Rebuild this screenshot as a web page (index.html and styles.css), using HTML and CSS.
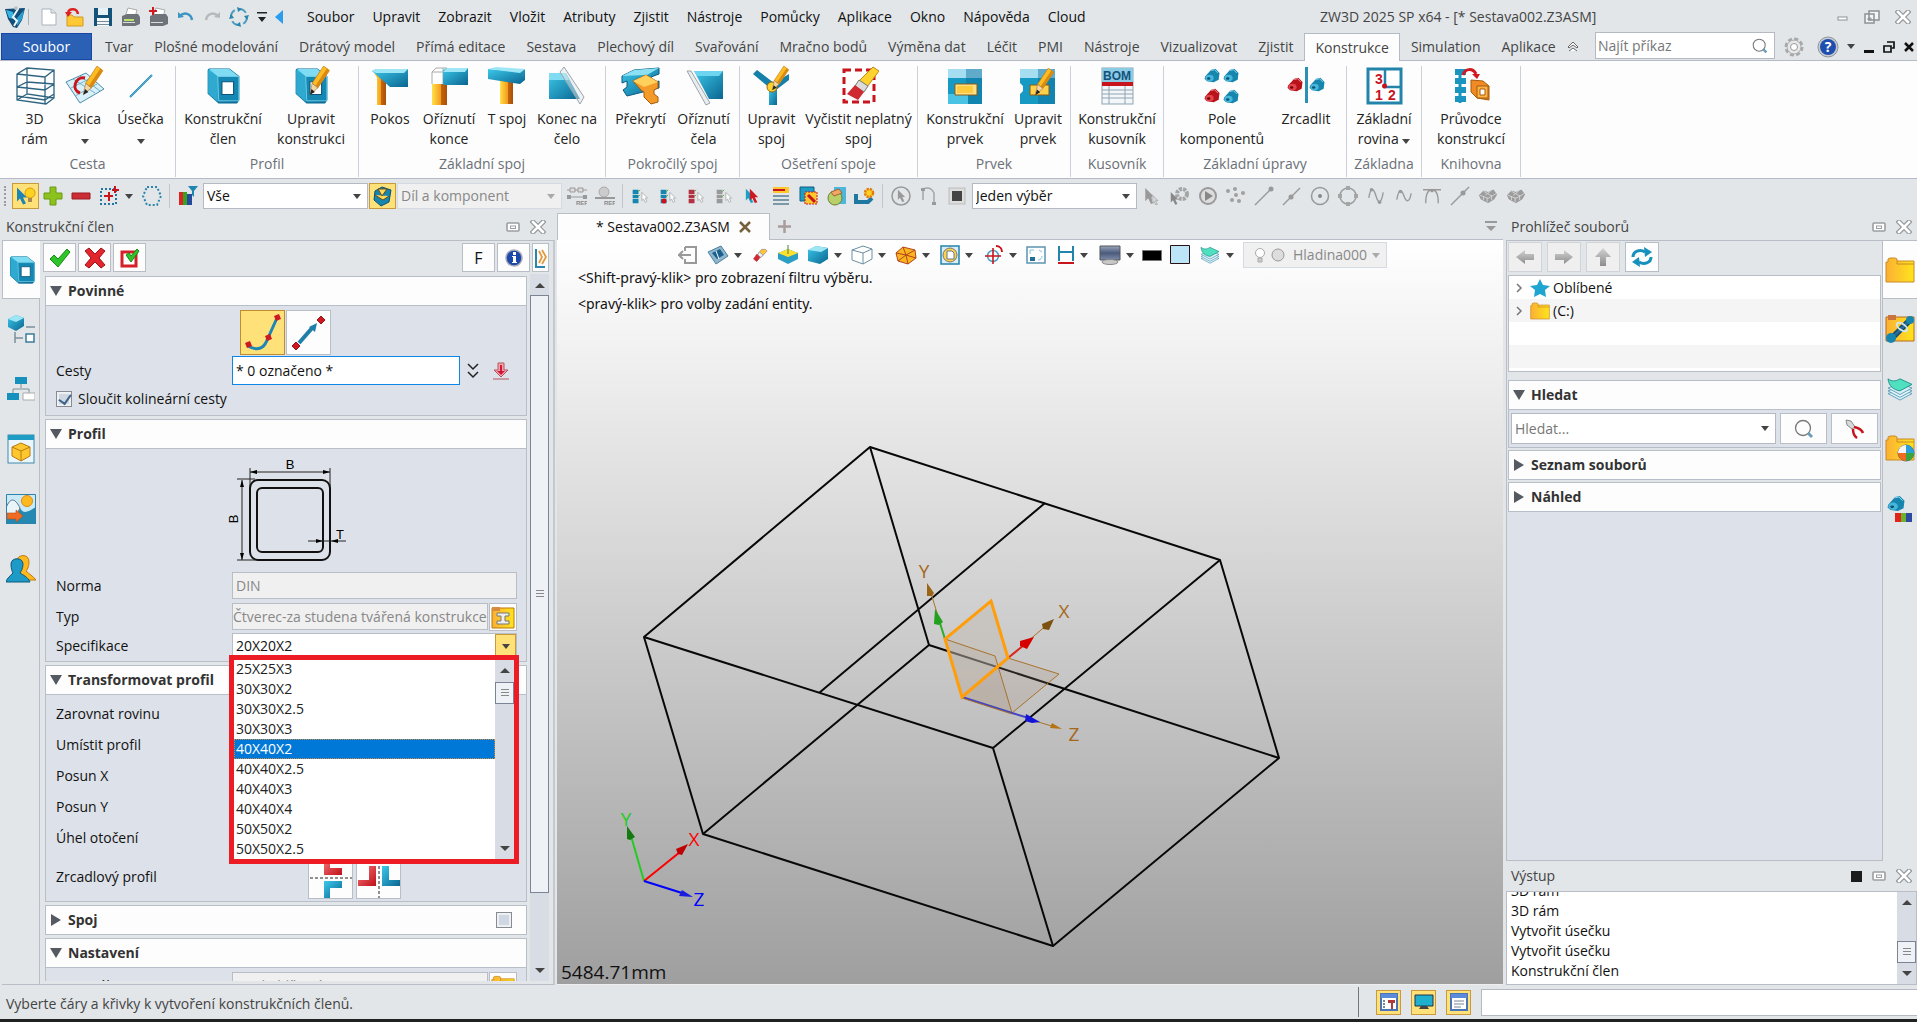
FILE: index.html
```html
<!DOCTYPE html>
<html lang="cs">
<head>
<meta charset="utf-8">
<title>ZW3D 2025 SP x64 - [* Sestava002.Z3ASM]</title>
<link rel="stylesheet" href="styles.css">
</head>
<body>
<svg class="defs" width="0" height="0" aria-hidden="true">
  <defs>
    <linearGradient id="gBlue" x1="0" y1="0" x2="1" y2="1"><stop offset="0" stop-color="#3cc8ea"/><stop offset="1" stop-color="#0a6590"/></linearGradient>
    <linearGradient id="gLight" x1="0" y1="0" x2="1" y2="1"><stop offset="0" stop-color="#e4f7fd"/><stop offset="1" stop-color="#4fc3e6"/></linearGradient>
    <linearGradient id="gGold" x1="0" y1="0" x2="1" y2="0"><stop offset="0" stop-color="#fbb034"/><stop offset="1" stop-color="#ffe41c"/></linearGradient>
    <linearGradient id="gPost" x1="0" y1="0" x2="1" y2="0"><stop offset="0" stop-color="#ffe14a"/><stop offset=".6" stop-color="#f39a1e"/><stop offset=".6" stop-color="#c7660c"/><stop offset="1" stop-color="#a84f08"/></linearGradient>
    <linearGradient id="gGrey" x1="0" y1="0" x2="0" y2="1"><stop offset="0" stop-color="#d2d2d2"/><stop offset="1" stop-color="#8d8d8d"/></linearGradient>
    <linearGradient id="gRed" x1="0" y1="0" x2="1" y2="1"><stop offset="0" stop-color="#f4777c"/><stop offset="1" stop-color="#c01018"/></linearGradient>
    <linearGradient id="gScreen" x1="0" y1="0" x2="0" y2="1"><stop offset="0" stop-color="#9aa6bd"/><stop offset=".5" stop-color="#4a5a7c"/><stop offset="1" stop-color="#7f8cab"/></linearGradient>
    <symbol id="caret" viewBox="0 0 8 5" preserveAspectRatio="none"><path d="M0 0h8L4 5z"/></symbol>
    <symbol id="pin" viewBox="0 0 14 10"><rect x="1" y="1" width="12" height="8" rx="1" fill="#fff" stroke="#9a9ea2" stroke-width="1.6"/><rect x="4.500" y="4" width="5" height="2.500" fill="#fff" stroke="#9a9ea2"/></symbol>
    <symbol id="close" viewBox="0 0 16 14"><path d="M3 2l10 10M13 2L3 12" stroke="#94989c" stroke-width="5" stroke-linecap="square"/><path d="M3 2l10 10M13 2L3 12" stroke="#fff" stroke-width="2.600" stroke-linecap="square"/></symbol>
    <symbol id="pencil" viewBox="0 0 20 26"><path d="M14 0l5 4-10 15-5-4z" fill="#fdbd22" stroke="#c17a0b" stroke-width=".6"/><path d="M17 2l2 2L9 19l-2-2z" fill="#d98a12"/><path d="M4 15l5 4-7 6z" fill="#f4d6a6" stroke="#8c6a3c" stroke-width=".5"/><path d="M2 25l1.500-5 3 2.500z" fill="#222"/></symbol>
    <symbol id="tube" viewBox="1 0 32 34"><path d="M4 1h19l9 7v22l-2 3H13l-10-9V2z" fill="url(#gBlue)" stroke="#0a6a94"/><path d="M4 1h19l9 7H12z" fill="#7fdcf3"/><path d="M3 2l9 6v24l-9-8z" fill="#2fa9cf"/><path d="M12 8h20v23H13z" fill="#1488b2" stroke="#7ad6ee" stroke-width=".8"/><path d="M16 13h11v12H16z" fill="#fff" stroke="#0a5478"/></symbol>
    <symbol id="folder" viewBox="0 0 30 26"><path d="M1 5h2V2l2-1h5l2 1v2h17v21H1z" fill="url(#gGold)" stroke="#c98a2a"/><path d="M12 4v3h17" fill="none" stroke="#c98a2a"/></symbol>
    <symbol id="layers" viewBox="0 0 30 26"><path d="M2 18l13 7 13-7-12-5z" fill="#d7eef7" stroke="#5b9db8"/><path d="M2 15l13 7 13-7-12-5z" fill="#e9f7fc" stroke="#5b9db8"/><path d="M2 12l13 7 13-7-12-5z" fill="#d7eef7" stroke="#5b9db8"/><path d="M2 2c4 3 8 3 13 0l13 6-13 7C8 14 3 10 2 2z" fill="#4fe0c0" stroke="#1f8f86"/></symbol>
    <symbol id="arrowcur" viewBox="0 0 12 18"><path d="M1 1l10 10H7l3 6-3 1-3-6-3 3z"/></symbol>
    <symbol id="blob" viewBox="0 0 20 18"><path d="M2 10l7-8 5-1 5 5-1 8-6 3-8-1-3-3z" fill="#1786ae"/><ellipse cx="7" cy="12" rx="5" ry="4" fill="#46b6da"/><ellipse cx="6" cy="12.500" rx="2" ry="1.500" fill="#0b5272"/><path d="M9 3l4-1 4 4" stroke="#8fe0f5" fill="none"/></symbol>
    <symbol id="blobred" viewBox="0 0 20 18"><path d="M2 10l7-8 5-1 5 5-1 8-6 3-8-1-3-3z" fill="#b8131b"/><ellipse cx="7" cy="12" rx="5" ry="4" fill="#e2444b"/><ellipse cx="6" cy="12.500" rx="2" ry="1.500" fill="#6e0508"/><path d="M9 3l4-1 4 4" stroke="#f9a1a4" fill="none"/></symbol>
    <symbol id="lens" viewBox="0 0 20 20"><circle cx="9" cy="9" r="7.500" fill="none" stroke="#777" stroke-width="1.300"/><path d="M14 14l4 4" stroke="#6b9dbb" stroke-width="3"/></symbol>
    <symbol id="rows" viewBox="0 0 24 20"><path d="M2 2h7v5H2zM2 8h7v4H2zM2 13h7v5H2z"/><path d="M9 4l2-2M9 10l2-2" stroke="#3aa11e"/><path d="M13 5l7 7h-3l2 4-2 1-2-4-2 2z" fill="#fff" stroke="#aaa"/></symbol>
    <symbol id="mesh" viewBox="0 0 22 20" preserveAspectRatio="none"><path d="M1 9l5-6 5 2 6-3 4 6-3 6-7 5-8-5z" fill="#9c9c9c"/><path d="M2 9l9 4 9-6M6 4l9 6M10 12v6M15 9v6M6 10v5M8 9l6-5" stroke="#d9d9d9" fill="none"/></symbol>
  </defs>
</svg>

<header>
  <div class="titlebar">
    <div class="quick">
      <svg width="22" height="24" viewBox="0 0 22 24"><path d="M1 4l20-1-3 12-5 8-4-1-5-8z" fill="#124e78"/><path d="M2 5l7 2 1 7-5-1z" fill="#37b5e6"/><path d="M13 13l7-8-2 9-5 7z" fill="#2b9ed2"/><path d="M11 1l3 3-5 8 4 4-3 5" stroke="#eef6fa" stroke-width="2" fill="none"/><circle cx="12" cy="3" r="2" fill="#b8c4cc"/></svg>
      <i class="vline"></i>
      <svg width="16" height="18" viewBox="0 0 16 18"><path d="M1 1h9l5 4v12H1z" fill="#fff" stroke="#a9b3bb"/><path d="M10 1v4h5" fill="#dfe6eb" stroke="#a9b3bb"/></svg>
      <svg width="20" height="20" viewBox="0 0 20 20"><path d="M2 8h5l2 2h9v9H2z" fill="#ffc835" stroke="#cf9a22"/><path d="M3 5c2-4 9-4 10 2" fill="none" stroke="#d22" stroke-width="2.500"/><path d="M0 5h7L3 10z" fill="#d22"/></svg>
      <svg width="20" height="20" viewBox="0 0 20 20"><path d="M1 1h18v18H1z" fill="#14527a"/><path d="M5 1h10v7H5z" fill="#e6f1f7"/><path d="M4 11h12v8H4z" fill="#f4f7f9"/><path d="M4 14h12v1H4zM4 17h12v1H4z" fill="#789"/></svg>
      <svg width="20" height="20" viewBox="0 0 20 20"><path d="M7 1l9 2-2 7H4z" fill="#fff" stroke="#aaa"/><path d="M1 9l5-2h11l2 3v7l-5 2H1z" fill="#6d7378"/><path d="M3 12h10v2H3z" fill="#b9e36a"/><path d="M2 15h12v1H2z" fill="#ddd"/></svg>
      <svg width="20" height="20" viewBox="0 0 20 20"><path d="M7 1l9 2-2 7H4z" fill="#fff" stroke="#aaa"/><path d="M1 9l5-2h11l2 3v7l-5 2H1z" fill="#6d7378"/><path d="M2 15h12v1H2z" fill="#ddd"/><path d="M4 0v8M0 4h8" stroke="#d21820" stroke-width="2"/></svg>
      <svg width="18" height="14" viewBox="0 0 18 14"><path d="M3 6c4-4 11-3 12 4" fill="none" stroke="#3a95c2" stroke-width="2.500"/><path d="M1 8V2l6 5z" fill="#3a95c2"/></svg>
      <svg width="18" height="14" viewBox="0 0 18 14"><path d="M15 6C11 2 4 3 3 10" fill="none" stroke="#b5b9bc" stroke-width="2.500"/><path d="M17 8V2l-6 5z" fill="#b5b9bc"/></svg>
      <svg width="20" height="20" viewBox="0 0 20 20"><circle cx="10" cy="10" r="8" fill="none" stroke="#4a9dbf" stroke-width="2" stroke-dasharray="8 4.500"/><path d="M8 0l5 2-4 3zM12 20l-5-2 4-3zM0 12l2-5 3 4zM20 8l-2 5-3-4z" fill="#2b86ad"/></svg>
      <svg width="10" height="10" viewBox="0 0 10 10"><path d="M0 0h10v1.500H0zM1 5h8L5 10z" fill="#222"/></svg>
      <svg width="8" height="14" viewBox="0 0 8 14"><path d="M8 0v14L0 7z" fill="#2a9df0"/></svg>
    </div>
    <nav class="menu">
      <a href="#">Soubor</a><a href="#">Upravit</a><a href="#">Zobrazit</a><a href="#">Vložit</a><a href="#">Atributy</a><a href="#">Zjistit</a><a href="#">Nástroje</a><a href="#">Pomůcky</a><a href="#">Aplikace</a><a href="#">Okno</a><a href="#">Nápověda</a><a href="#">Cloud</a>
    </nav>
    <h1>ZW3D 2025 SP x64 - [* Sestava002.Z3ASM]</h1>
    <div class="wincontrols">
      <button aria-label="Minimalizovat"><svg width="12" height="6" viewBox="0 0 12 6"><rect x="1" y="1" width="9" height="3" fill="#fff" stroke="#8d9195"/></svg></button>
      <button aria-label="Obnovit"><svg width="16" height="14" viewBox="0 0 16 14"><path d="M5 1h10v9H5zM1 4h9v9H1z" fill="#f4f5f6" stroke="#8d9195" stroke-width="1.500"/><path d="M4 8h3v2H4z" fill="none" stroke="#8d9195"/></svg></button>
      <button aria-label="Zavřít"><svg width="16" height="14"><use href="#close"/></svg></button>
    </div>
  </div>

  <div class="tabs">
    <button class="file">Soubor</button>
    <button>Tvar</button><button>Plošné modelování</button><button>Drátový model</button><button>Přímá editace</button><button>Sestava</button><button>Plechový díl</button><button>Svařování</button><button>Mračno bodů</button><button>Výměna dat</button><button>Léčit</button><button>PMI</button><button>Nástroje</button><button>Vizualizovat</button><button>Zjistit</button><button class="on">Konstrukce</button><button>Simulation</button><button>Aplikace</button>
    <div class="tabtools">
      <svg width="12" height="12" viewBox="0 0 12 12"><path d="M1 6l5-5 5 5-1 1-4-3-4 3zM2 10l4-3 4 3" fill="#fff" stroke="#666"/></svg>
      <label class="find"><input type="text" placeholder="Najít příkaz" aria-label="Najít příkaz"><svg width="16" height="16"><use href="#lens"/></svg></label>
      <svg width="22" height="22" viewBox="0 0 22 22"><circle cx="11" cy="11" r="8" fill="#eee" stroke="#a5a9ac" stroke-width="3" stroke-dasharray="4 2.280"/><circle cx="11" cy="11" r="7" fill="#e8e8e8" stroke="#a5a9ac"/><circle cx="11" cy="11" r="3.500" fill="#fff" stroke="#999"/></svg>
      <svg class="help" width="22" height="22" viewBox="0 0 22 22"><circle cx="11" cy="11" r="10" fill="#c7ccd4" stroke="#8e949c"/><circle cx="11" cy="11" r="8" fill="#1f4fae"/><text x="11" y="16" text-anchor="middle" class="qmark">?</text></svg>
      <svg class="dark" width="8" height="5"><use href="#caret"/></svg>
      <svg width="12" height="14" viewBox="0 0 12 14"><path d="M1 10h10v3H1z" fill="#111"/></svg>
      <svg width="12" height="14" viewBox="0 0 12 14"><path d="M4 2h7v6H9M1 6h7v6H1z" fill="none" stroke="#111" stroke-width="1.700"/></svg>
      <svg width="12" height="12" viewBox="0 0 12 12"><path d="M2 2l8 8M10 2l-8 8" stroke="#111" stroke-width="2.500"/></svg>
    </div>
  </div>

  <div class="ribbon">
    <section class="g175"><div>
      <button class="w48"><svg width="40" height="40" viewBox="0 0 40 40"><g fill="none" stroke="#2c6480" stroke-width="1.300"><path d="M2 8l10-6 27 2v28l-8 6-29-4zM2 8l28 3 9-7M30 11v27M2 21l28 3 9-6M2 21l10-5 27 2M2 30l28 4 9-6M12 2v26l27 4M12 28L2 34"/></g></svg><span>3D<br>rám</span></button>
      <button class="w52"><svg width="40" height="40" viewBox="0 0 40 40"><path d="M1 16l20-9 18 16-24 14-6-9z" fill="#d9f0f8" stroke="#4b8fae"/><path d="M8 13l22 14M15 10l20 15M6 22l20-10M10 30l22-12" stroke="#6fb0cb" fill="none"/><path d="M20 12c-10-2-14 12-5 15" fill="none" stroke="#c8141c" stroke-width="3"/><use href="#pencil" x="16" y="0" width="23" height="30"/></svg><span>Skica<br><svg class="dark" width="8" height="5"><use href="#caret"/></svg></span></button>
      <button class="w60"><svg width="40" height="40" viewBox="0 0 40 40"><path d="M9 31L31 9" stroke="#1f86b4" stroke-width="2"/><path d="M9 31L31 9" stroke="#7cc6e2" stroke-width=".6"/></svg><span>Úsečka<br><svg class="dark" width="8" height="5"><use href="#caret"/></svg></span></button>
    </div><h2>Cesta</h2></section>
    <section class="g183"><div>
      <button class="w88"><svg width="40" height="40"><use href="#tube" x="2" y="2" width="36" height="36"/></svg><span>Konstrukční<br>člen</span></button>
      <button class="w88"><svg width="40" height="40"><use href="#tube" x="2" y="2" width="36" height="36"/><use href="#pencil" x="16" y="0" width="24" height="30"/></svg><span>Upravit<br>konstrukci</span></button>
    </div><h2>Profil</h2></section>
    <section class="g247"><div>
      <button class="w54"><svg width="40" height="40" viewBox="0 0 40 40"><path d="M4 7l12 6v26H7V12z" fill="url(#gPost)"/><path d="M2 5l4-2h32v18H20z" fill="url(#gBlue)"/><path d="M2 5l4-2h32l-4 4H6z" fill="#9ee6f6"/></svg><span>Pokos</span></button>
      <button class="w64"><svg width="40" height="40" viewBox="0 0 40 40"><path d="M3 18h15v21H3z" fill="url(#gPost)"/><path d="M3 18V6l4-4h11v4H3M14 2v16" fill="none" stroke="#aaa"/><path d="M14 4l4-2h21v17H14z" fill="url(#gBlue)"/><path d="M14 6l4-4h21l-3 4z" fill="#9ee6f6"/></svg><span>Oříznutí<br>konce</span></button>
      <button class="w52"><svg width="40" height="40" viewBox="0 0 40 40"><path d="M13 14h13v24H13z" fill="url(#gPost)"/><path d="M1 3l32 3 5-3v11l-5 4-32-5z" fill="url(#gBlue)"/><path d="M1 3l8-2 29 2-5 4z" fill="#9ee6f6"/></svg><span>T spoj</span></button>
      <button class="w68"><svg width="40" height="40" viewBox="0 0 40 40"><path d="M2 7h17l14 26H2z" fill="url(#gBlue)"/><path d="M2 7h17l3 7H2z" fill="#7fdcf3"/><path d="M13 6l4-5 20 30-4 7z" fill="#dfe6ea" fill-opacity=".5" stroke="#9aa4aa"/></svg><span>Konec na<br>čelo</span></button>
    </div><h2>Základní spoj</h2></section>
    <section class="g134"><div>
      <button class="w62"><svg width="40" height="40" viewBox="0 0 40 40"><path d="M1 10l12-6 25-2v6l-8 3v6l8-2v7L6 30l-4-6 4-3v-6l-5 2z" fill="url(#gBlue)" stroke="#0a5a80"/><path d="M1 10l12-6 25-2-12 7z" fill="#8be0f4"/><path d="M12 15l13-6 12 7v6l-4 2v4l4 3v5l-7 2-7-7v-5l-3-2z" fill="#f39a28" stroke="#a65a08"/><path d="M12 15l13-6 12 7-14 5z" fill="#ffd05c"/></svg><span>Překrytí</span></button>
      <button class="w64"><svg width="40" height="40" viewBox="0 0 40 40"><path d="M10 5h29v28H25z" fill="url(#gBlue)"/><path d="M10 5h29l-4 5H13z" fill="#6dd5ef"/><path d="M3 5h4l19 32-4 2z" fill="#e9edf0" stroke="#9aa4aa"/></svg><span>Oříznutí<br>čela</span></button>
    </div><h2>Pokročilý spoj</h2></section>
    <section class="g178"><div>
      <button class="w60"><svg width="40" height="40" viewBox="0 0 40 40"><path d="M1 8l4-4 17 13-3 6zM22 17l15-9v6L24 24z" fill="#1580aa"/><path d="M17 22h8v17h-8z" fill="url(#gBlue)"/><circle cx="20" cy="21" r="5" fill="#ffd22e" stroke="#9a6a08"/><use href="#pencil" x="18" y="0" width="20" height="25"/></svg><span>Upravit<br>spoj</span></button>
      <button class="w114"><svg width="40" height="40" viewBox="0 0 40 40"><path d="M5 4h30v32H5z" fill="none" stroke="#c8141c" stroke-width="3" stroke-dasharray="7 4"/><path d="M34 1l6 4-12 16-8-6z" fill="#ffd22e" stroke="#b98a10"/><path d="M20 14l9 6-4 6-9-6z" fill="#dcdcdc" stroke="#777"/><path d="M16 19l9 7-6 8-11-6z" fill="#cf2a32"/></svg><span>Vyčistit neplatný<br>spoj</span></button>
    </div><h2>Ošetření spoje</h2></section>
    <section class="g153"><div>
      <button class="w88"><svg width="40" height="40" viewBox="0 0 40 40"><path d="M3 3h34v35H3z" fill="#169ac4"/><path d="M3 3h34v9H3z" fill="#a5def0"/><path d="M21 3v35h16V3z" fill="#0c6c98" fill-opacity=".45"/><path d="M3 38h20V28H3z" fill="#49c2e4"/><path d="M10 18h22v11H10z" fill="#ffe08a" stroke="#8a5a10"/><path d="M12 20h16v7H12z" fill="#ffca3c"/></svg><span>Konstrukční<br>prvek</span></button>
      <button class="w58"><svg width="40" height="40" viewBox="0 0 40 40"><path d="M2 3h35v35H2V28l3-3v-5l-3-3z" fill="#169ac4"/><path d="M2 3h35v9H2z" fill="#a5def0"/><path d="M20 3v35h17V3z" fill="#0c6c98" fill-opacity=".45"/><path d="M12 19h19v10H12z" fill="#ffd04a" stroke="#8a5a10"/><use href="#pencil" x="14" y="2" width="24" height="28"/></svg><span>Upravit<br>prvek</span></button>
    </div><h2>Prvek</h2></section>
    <section class="g93"><div>
      <button class="w88"><svg width="40" height="40" viewBox="0 0 40 40"><rect x="5" y="2" width="31" height="36" fill="#f4f7f9" stroke="#8fa3b2"/><rect x="5" y="2" width="31" height="14" fill="#8ccbe6"/><text x="20" y="14" text-anchor="middle" class="bom">BOM</text><path d="M5 16h31v4H5z" fill="#c8141c"/><path d="M5 24h31M5 28h31M5 32h31M12 20v18M28 20v18" stroke="#8fa3b2"/></svg><span>Konstrukční<br>kusovník</span></button>
    </div><h2>Kusovník</h2></section>
    <section class="g183 pole"><div>
      <button class="w96"><svg width="40" height="40"><use href="#blob" x="1" y="2" width="18" height="15"/><use href="#blob" x="20" y="2" width="18" height="15"/><use href="#blobred" x="1" y="22" width="18" height="15"/><use href="#blob" x="20" y="23" width="18" height="15"/></svg><span>Pole<br>komponentů</span></button>
      <button class="w72"><svg width="40" height="40" viewBox="0 0 40 40"><use href="#blobred" x="0" y="11" width="18" height="15"/><use href="#blob" x="22" y="11" width="18" height="15"/><path d="M19 1h3v36h-3z" fill="#2d8fb4"/></svg><span>Zrcadlit</span></button>
    </div><h2>Základní úpravy</h2></section>
    <section class="g75"><div>
      <button class="w72"><svg width="40" height="40" viewBox="0 0 40 40"><rect x="4" y="3" width="33" height="34" fill="#fff" stroke="#2284aa" stroke-width="3"/><path d="M21 3v18h16" fill="none" stroke="#2284aa" stroke-width="2.500"/><circle cx="20.500" cy="20" r="2.500" fill="#c8141c"/><text x="11" y="18" class="num">3</text><text x="11" y="34" class="num">1</text><text x="24" y="34" class="num">2</text></svg><span>Základní<br>rovina <svg class="dark" width="8" height="5"><use href="#caret"/></svg></span></button>
    </div><h2>Základna</h2></section>
    <section class="g99"><div>
      <button class="w96"><svg width="40" height="40" viewBox="0 0 40 40"><path d="M4 3h11v6H4zM4 12h11v6H4zM4 21h11v6H4zM4 30h11v6H4z" fill="#1b95c0"/><path d="M9 3v34" stroke="#1b95c0" stroke-width="3"/><path d="M12 9C14 2 22 2 25 8" fill="none" stroke="#d21820" stroke-width="3"/><path d="M21 8h8l-3 5z" fill="#d21820"/><path d="M20 14l12 1 6 5v14l-12-2-6-6z" fill="#f08a24" stroke="#a65a08"/><path d="M26 20h11v12H26z" fill="#ffb347" stroke="#a65a08"/><path d="M29 23h5v6h-5z" fill="#fff" stroke="#a65a08"/></svg><span>Průvodce<br>konstrukcí</span></button>
    </div><h2>Knihovna</h2></section>
  </div>

  <div class="toolbar">
    <i class="grip"></i>
    <button class="tb hot"><svg width="22" height="22" viewBox="0 0 22 22"><use href="#arrowcur" x="1" y="1" width="12" height="19" fill="#1f86b4"/><circle cx="15" cy="8" r="5" fill="#ffd21f" stroke="#d89a10"/><path d="M13 13h4v4h-4z" fill="#a88a50"/></svg></button>
    <button class="tb"><svg width="20" height="20" viewBox="0 0 20 20"><path d="M7 1h6v6h6v6h-6v6H7v-6H1V7h6z" fill="#8cc21e" stroke="#6a9a10"/></svg></button>
    <button class="tb"><svg width="20" height="20" viewBox="0 0 20 20"><path d="M1 7h18v6H1z" fill="#cc2c34" stroke="#9c1820"/></svg></button>
    <button class="tb"><svg width="20" height="20" viewBox="0 0 20 20"><path d="M2 3h15v15H2z" fill="none" stroke="#1f78a0" stroke-width="2" stroke-dasharray="2 2"/><path d="M10 6v9M5 10h9M16 0v7M13 4h7" stroke="#c8141c" stroke-width="2"/></svg></button>
    <svg class="dark gapr" width="8" height="5"><use href="#caret"/></svg>
    <button class="tb"><svg width="20" height="20" viewBox="0 0 20 20"><path d="M5 1h10l4 9-4 9H5l-4-9z" fill="none" stroke="#2b86ad" stroke-width="2" stroke-dasharray="2 2"/></svg></button>
    <i class="tsep"></i>
    <button class="tb"><svg width="20" height="20" viewBox="0 0 20 20"><path d="M1 6h4v13H1z" fill="#d22"/><path d="M5 6h4v13H5z" fill="#3aa11e"/><path d="M9 8h5v11H9z" fill="#234a9c"/><path d="M10 0h10l-4 5v6l-2-2V5z" fill="#1f86b4"/></svg></button>
    <span class="combo"><select aria-label="Filtr"><option>Vše</option></select><svg class="dark" width="8" height="5"><use href="#caret"/></svg></span>
    <button class="tb hot"><svg width="22" height="22" viewBox="0 0 22 22"><path d="M3 6l7-4 9 3-2 12-8 4-7-6z" fill="#1786ae" stroke="#0b5272"/><path d="M3 10l8 5 6-4M6 4h9l-5 7z" fill="#ffd85a" stroke="#6b4a10"/></svg></button>
    <span class="combo off"><select aria-label="Rozsah" disabled><option>Díl a komponent</option></select><svg width="8" height="5"><use href="#caret"/></svg></span>
    <button class="tb"><svg width="20" height="20" viewBox="0 0 20 20"><path d="M0 4h20M0 11h20" stroke="#999"/><path d="M3 2h5v4H3zM11 2h5v4h-5z" fill="#ddd" stroke="#999"/><path d="M0 9h4v4H0zM16 9h4v4h-4z" fill="#999"/><text x="9" y="19" class="ref">REF</text></svg></button>
    <button class="tb"><svg width="20" height="20" viewBox="0 0 20 20"><circle cx="9" cy="6" r="5" fill="#ccc" stroke="#aaa"/><path d="M0 12h20" stroke="#999" stroke-width="2"/><text x="9" y="19" class="ref">REF</text></svg></button>
    <i class="tsep"></i>
    <button class="tb"><svg width="20" height="17" fill="#1786ae"><use href="#rows"/></svg></button>
    <button class="tb"><svg width="20" height="17" fill="#1786ae"><use href="#rows"/><circle cx="5" cy="13" r="2.500" fill="#c8141c"/></svg></button>
    <button class="tb"><svg width="20" height="17" fill="#b33040"><use href="#rows"/></svg></button>
    <button class="tb"><svg width="20" height="17" fill="#999"><use href="#rows"/></svg></button>
    <button class="tb"><svg width="20" height="20"><use href="#arrowcur" x="2" y="2" width="10" height="15" fill="#18a0c8"/><use href="#arrowcur" x="6" y="2" width="10" height="15" fill="#cc1a22"/></svg></button>
    <button class="tb"><svg width="20" height="20" viewBox="0 0 20 20"><path d="M2 1h16v6H2z" fill="#ffc72e"/><path d="M2 4h12" stroke="#c8141c" stroke-width="2"/><path d="M2 10h16M2 14h16M2 18h16" stroke="#7b98a8" stroke-width="2"/></svg></button>
    <button class="tb"><svg width="20" height="20" viewBox="0 0 20 20"><path d="M1 1h14v14H1z" fill="#1f9cc4" stroke="#0f5c80"/><path d="M6 6h12v12H6z" fill="#ffc72e" stroke="#c8141c" stroke-dasharray="2 1"/><path d="M9 9l7 7" stroke="#c8141c" stroke-width="3"/></svg></button>
    <button class="tb"><svg width="20" height="20" viewBox="0 0 20 20"><path d="M7 1h12v17H7z" fill="#4db6da"/><ellipse cx="8" cy="12" rx="7" ry="7" fill="#b9cf6a" stroke="#6c7f34"/><path d="M4 6l8-3 3 4-8 3z" fill="#f0a868" stroke="#a8622a"/></svg></button>
    <button class="tb"><svg width="22" height="20" viewBox="0 0 22 20"><path d="M2 8v8h12l4-4" fill="none" stroke="#1f78a0" stroke-width="4"/><circle cx="15" cy="7" r="4" fill="#ffd21f" stroke="#e07a10" stroke-width="2.500" stroke-dasharray="2.200 1"/></svg></button>
    <i class="tsep"></i>
    <button class="tb"><svg width="22" height="22" viewBox="0 0 22 22"><circle cx="11" cy="11" r="9" fill="none" stroke="#999" stroke-width="1.500"/><use href="#arrowcur" x="7" y="4" width="9" height="13" fill="#999"/></svg></button>
    <button class="tb"><svg width="20" height="20" viewBox="0 0 20 20"><path d="M4 14V3c5-2 9 0 11 4v12" fill="none" stroke="#a5a5a5" stroke-width="1.500"/><path d="M2 2h4v3H2zM13 16h4v3h-4z" fill="#999"/></svg></button>
    <button class="tb"><svg width="18" height="18" viewBox="0 0 18 18"><rect x="1" y="1" width="16" height="16" fill="#ddd" stroke="#bbb"/><rect x="4" y="4" width="10" height="10" fill="#444"/></svg></button>
    <span class="combo"><select aria-label="Výběr"><option>Jeden výběr</option></select><svg class="dark" width="8" height="5"><use href="#caret"/></svg></span>
    <button class="tb"><svg width="20" height="20"><use href="#arrowcur" x="2" y="1" width="12" height="17" fill="#999"/><use href="#arrowcur" x="9" y="8" width="8" height="11" fill="#d5d5d5" stroke="#999"/></svg></button>
    <button class="tb"><svg width="20" height="20" viewBox="0 0 20 20"><circle cx="12" cy="8" r="5" fill="none" stroke="#a5a5a5" stroke-width="4" stroke-dasharray="3 1"/><use href="#arrowcur" x="0" y="5" width="9" height="14" fill="#888"/></svg></button>
    <button class="tb"><svg width="20" height="20" viewBox="0 0 20 20"><circle cx="10" cy="10" r="8" fill="#ddd" stroke="#999" stroke-width="2"/><path d="M7 5l8 5-8 5z" fill="#888"/></svg></button>
    <button class="tb"><svg width="20" height="20" viewBox="0 0 20 20" fill="#a0a0a0"><circle cx="2" cy="5" r="2"/><circle cx="9" cy="3" r="2"/><circle cx="17" cy="7" r="2"/><circle cx="10" cy="9" r="2"/><circle cx="6" cy="14" r="2"/><circle cx="13" cy="15" r="2"/></svg></button>
    <button class="tb"><svg width="20" height="20" viewBox="0 0 20 20"><path d="M1 19L18 2" stroke="#999" stroke-width="1.500"/><circle cx="17" cy="3" r="2.500" fill="#999"/></svg></button>
    <button class="tb"><svg width="20" height="20" viewBox="0 0 20 20"><path d="M1 19L18 2" stroke="#999" stroke-width="1.500"/><circle cx="9" cy="11" r="2.500" fill="#999"/></svg></button>
    <button class="tb"><svg width="20" height="20" viewBox="0 0 20 20"><circle cx="10" cy="10" r="8.500" fill="none" stroke="#999" stroke-width="1.500"/><circle cx="10" cy="10" r="2" fill="#888"/></svg></button>
    <button class="tb"><svg width="20" height="20" viewBox="0 0 20 20"><circle cx="10" cy="10" r="8" fill="none" stroke="#999" stroke-width="1.500"/><path d="M8 0h4v4H8zM8 16h4v4H8zM0 8h4v4H0zM16 8h4v4h-4z" fill="#a5a5a5"/></svg></button>
    <button class="tb"><svg width="18" height="20" viewBox="0 0 20 20"><path d="M2 12C4 0 7 0 10 10s6 8 8-4" fill="none" stroke="#999" stroke-width="1.500"/><circle cx="5" cy="3" r="2" fill="#999"/><circle cx="14" cy="17" r="2" fill="#999"/></svg></button>
    <button class="tb"><svg width="18" height="18" viewBox="0 0 20 20"><path d="M2 14C4 2 7 2 10 10s6 7 8-3" fill="none" stroke="#999" stroke-width="1.500"/><circle cx="6" cy="5" r="2" fill="#999"/></svg></button>
    <button class="tb"><svg width="20" height="18" viewBox="0 0 20 20"><path d="M0 3h20M3 18C3 8 6 3 10 3s7 5 7 15" fill="none" stroke="#999" stroke-width="1.500"/><circle cx="10" cy="4" r="2" fill="#999"/></svg></button>
    <button class="tb"><svg width="20" height="20" viewBox="0 0 20 20"><path d="M1 19L19 1" stroke="#999" stroke-width="1.500"/><circle cx="13" cy="7" r="2.500" fill="#999"/></svg></button>
    <button class="tb"><svg width="20" height="16"><use href="#mesh"/></svg></button>
    <button class="tb"><svg width="20" height="16"><use href="#mesh"/></svg></button>
  </div>
</header>

<main>
  <aside class="left">
    <div class="phead"><h2>Konstrukční člen</h2><svg width="14" height="10"><use href="#pin"/></svg><svg width="16" height="14"><use href="#close"/></svg></div>
    <div class="lbody">
      <nav class="strip">
        <button class="on"><svg width="28" height="28"><use href="#tube"/></svg></button>
        <button><svg width="28" height="30" viewBox="0 0 28 30"><path d="M1 5l8-4 8 3v8l-8 5-8-4z" fill="url(#gBlue)"/><path d="M1 5l8-4 8 3-8 4z" fill="#9ee6f6"/><path d="M19 13h9M8 18v11M8 24h8" stroke="#7c909c" stroke-width="1.500"/><path d="M19 20h8v8h-8z" fill="#fff" stroke="#3b7c9c" stroke-width="1.500"/></svg></button>
        <button><svg width="28" height="26" viewBox="0 0 28 26"><path d="M8 1h12v7H8zM0 17h12v7H0z" fill="#1690bc"/><path d="M14 8v4M6 17v-4h16v4" fill="none" stroke="#7c909c"/><path d="M16 17h12v7H16z" fill="#fff" stroke="#aaa"/></svg></button>
        <button><svg width="28" height="30" viewBox="0 0 28 30"><rect x="1" y="1" width="26" height="28" fill="#eaf6fb" stroke="#3f8aae"/><path d="M1 1h26v5H1z" fill="#1f9cc4"/><path d="M5 13l9-4 9 4v9l-9 5-9-5z" fill="#ffc72e" stroke="#b87a10"/><path d="M5 13l9 4 9-4M14 17v10" fill="none" stroke="#b87a10"/></svg></button>
        <button><svg width="30" height="30" viewBox="0 0 30 30"><path d="M0 0h30v30H0z" fill="#c9e9f6"/><path d="M0 14C5 1 10 6 14 14s10 2 16-1v17H0z" fill="#2389b2"/><path d="M0 14C5 1 10 6 14 14l-4 8H0z" fill="#eaf5fa" stroke="#678"/><circle cx="21" cy="7" r="5.500" fill="#ffb81e" stroke="#e08a10"/><path d="M1 19h9v-3l7 6-7 6v-3H1z" fill="#f06c22" stroke="#b84a10" stroke-width=".6"/><path d="M.5.5h29v29H.5z" fill="none" stroke="#2f83a8"/></svg></button>
        <button><svg width="30" height="28" viewBox="0 0 30 28"><path d="M11 4c3-5 12-5 12 3 0 5-2 8-3 9 3 3 7 5 10 9H15z" fill="#ffb81e" stroke="#c07a10"/><path d="M5 9c0-7 12-7 12 0 0 5-2 7-3 9 3 2 8 4 10 9H0c1-4 4-6 7-9-1-2-2-4-2-9z" fill="#1d9ac6" stroke="#0b5a80"/></svg></button>
      </nav>
      <div class="panel">
        <div class="actions">
          <button class="sq"><svg width="22" height="20" viewBox="0 0 22 20"><path d="M1 11l4-4 4 4L18 1l3 3L9 19z" fill="#2fc52a" stroke="#178a14"/></svg></button>
          <button class="sq"><svg width="22" height="22" viewBox="0 0 22 22"><path d="M1 4l4-3 6 6 6-6 4 3-6 7 6 7-4 3-6-6-6 6-4-3 6-7z" fill="#e3262e" stroke="#9c1218"/></svg></button>
          <button class="sq"><svg width="20" height="20" viewBox="0 0 20 20"><path d="M2 4h14v14H2z" fill="#fff" stroke="#d42028" stroke-width="3"/><path d="M6 7l3-2 2 3 6-7 2 2-8 11z" fill="#2fc52a" stroke="#178a14"/></svg></button>
          <button class="sq push">F</button>
          <button class="sq"><svg width="18" height="18" viewBox="0 0 18 18"><circle cx="9" cy="9" r="8" fill="#1d49a8" stroke="#aab" stroke-width="1.500"/><path d="M8 3h3v3H8zM7 7h4v6h1v1H7v-1h1V8H7z" fill="#fff"/></svg></button>
          <button class="sq thin"><svg width="12" height="20" viewBox="0 0 12 20"><path d="M1 1v18h9" fill="none" stroke="#2b86ad" stroke-width="2"/><path d="M4 3l3 6-3 6M7 2l4 7-4 7" fill="none" stroke="#e39a3c" stroke-width="1.800"/></svg></button>
        </div>
        <div class="scroller">
          <div class="sections">
            <section class="box">
              <h3><svg class="tri" width="12" height="10"><use href="#caret" width="12" height="10"/></svg>Povinné</h3>
              <div class="b111">
                <div class="modes"><button class="hot"><svg width="40" height="40" viewBox="0 0 40 40"><path d="M5 33c14 8 18-3 20-8L34 5" fill="none" stroke="#1f86b4" stroke-width="3"/><path d="M2 30l5-2 2 5-5 2zM22 23l5-2 2 5-5 2zM31 3l5-2 2 5-5 2z" fill="#cc1a22"/></svg></button><button><svg width="40" height="40" viewBox="0 0 40 40"><path d="M10 30L24 14" stroke="#1f7fa8" stroke-width="4"/><path d="M20 14l8-4-2 9z" fill="#1f7fa8"/><path d="M7 29l4 4-4 4-4-4zM32 3l4 4-4 4-4-4z" fill="#cc1a22" stroke="#9c1218"/></svg></button></div>
                <div class="row cesty"><label for="cesty">Cesty</label><input id="cesty" type="text" value="* 0 označeno *"><svg width="12" height="16" viewBox="0 0 12 16"><path d="M1 1l5 5 5-5M1 9l5 5 5-5" fill="none" stroke="#222" stroke-width="1.500"/></svg><svg width="16" height="18" viewBox="0 0 16 18"><path d="M5 1h6v7h4l-7 7-7-7h4z" fill="#f4a9ac" stroke="#b5555a"/><path d="M7 3h2v6h3l-4 4-4-4h3z" fill="#d4143c"/><path d="M0 17h16" stroke="#b5555a"/></svg></div>
                <label class="tick"><input type="checkbox" checked>Sloučit kolineární cesty</label>
              </div>
            </section>
            <section class="box">
              <h3><svg class="tri" width="12" height="10"><use href="#caret" width="12" height="10"/></svg>Profil</h3>
              <div class="b214">
                <svg class="profile" width="120" height="108" viewBox="0 0 120 108"><g fill="none" stroke="#111" stroke-width="2"><rect x="22" y="23" width="80" height="80" rx="8"/><rect x="29" y="31" width="66" height="64" rx="5"/></g><path d="M22 11v18M102 11v18M9 22h18M9 103h18M22 15h80M14 23v80M80 84h38" stroke="#222" fill="none"/><path d="M22 15l7-2v4zM102 15l-7-2v4zM14 23l-2 7h4zM14 103l-2-7h4zM95 84l-7-2v4zM103 84l7-2v4z"/><text x="62" y="12" text-anchor="middle">B</text><text x="-62" y="10" text-anchor="middle" transform="rotate(-90)">B</text><text x="112" y="82" text-anchor="middle">T</text></svg>
                <div class="row"><label for="norma">Norma</label><input id="norma" type="text" value="DIN" disabled></div>
                <div class="row"><label for="typ">Typ</label><input id="typ" type="text" class="tight" value="Čtverec-za studena tvářená konstrukce" disabled><button class="lib" aria-label="Knihovna"><svg width="24" height="24" viewBox="0 0 24 24"><path d="M1 3h22v20H1z" fill="url(#gGold)" stroke="#b87a10"/><path d="M1 2h8v4H1z" fill="#d98a3c"/><path d="M6 8h12v3h-4v5h4v3H6v-3h4v-5H6z" fill="#eee" stroke="#777"/></svg></button></div>
                <div class="row spec"><label for="spec">Specifikace</label>
                  <span class="pick"><select id="spec"><option>20X20X2</option></select><i><svg class="dark" width="8" height="5"><use href="#caret"/></svg></i>
                    <span class="popup"><span class="list" role="listbox" aria-label="Specifikace"><span role="option">25X25X3</span><span role="option">30X30X2</span><span role="option">30X30X2.5</span><span role="option">30X30X3</span><span role="option" aria-selected="true">40X40X2</span><span role="option">40X40X2.5</span><span role="option">40X40X3</span><span role="option">40X40X4</span><span role="option">50X50X2</span><span role="option">50X50X2.5</span></span><span class="bar"><svg class="up" width="10" height="5"><use href="#caret"/></svg><b></b><svg width="10" height="5"><use href="#caret"/></svg></span></span>
                  </span></div>
              </div>
            </section>
            <section class="box">
              <h3><svg class="tri" width="12" height="10"><use href="#caret" width="12" height="10"/></svg>Transformovat profil</h3>
              <div class="b208">
                <div class="row">Zarovnat rovinu</div><div class="row">Umístit profil</div><div class="row">Posun X</div><div class="row">Posun Y</div><div class="row">Úhel otočení</div>
                <div class="row mirror"><span>Zrcadlový profil</span><button><svg width="42" height="42" viewBox="0 0 42 42"><path d="M14 2h6v10h12v7H14z" fill="url(#gRed)"/><path d="M0 22h42" stroke="#222" stroke-dasharray="3 2"/><path d="M14 25h18v7H20v10h-6z" fill="url(#gBlue)"/></svg></button><button><svg width="42" height="42" viewBox="0 0 42 42"><path d="M18 10h-7v14H0v6h18z" fill="url(#gRed)"/><path d="M21 0v42" stroke="#222" stroke-dasharray="3 2"/><path d="M24 10h7v14h11v6H24z" fill="url(#gBlue)"/></svg></button></div>
              </div>
            </section>
            <section class="box">
              <h3><svg class="tri side" width="12" height="10"><use href="#caret" width="12" height="10"/></svg>Spoj<input type="checkbox" class="grey" aria-label="Spoj"></h3>
            </section>
            <section class="box">
              <h3><svg class="tri" width="12" height="10"><use href="#caret" width="12" height="10"/></svg>Nastavení</h3>
              <div class="mat"><div class="row"><label for="mat">Materiál</label><input id="mat" type="text" value="Ocel uhlíková" disabled><button class="lib" aria-label="Materiály"><svg width="24" height="22"><use href="#folder"/></svg></button></div></div>
            </section>
          </div>
          <div class="bar tall"><svg class="up" width="10" height="5"><use href="#caret"/></svg><b></b><svg width="10" height="5"><use href="#caret"/></svg></div>
        </div>
      </div>
    </div>
  </aside>

  <section class="center">
    <div class="docs">
      <div class="doc">* Sestava002.Z3ASM <svg width="14" height="12" viewBox="0 0 14 12"><path d="M2 1l10 10M12 1L2 11" stroke="#76613c" stroke-width="2.500"/></svg></div>
      <svg width="13" height="13" viewBox="0 0 13 13"><path d="M6.500 0v13M0 6.500h13" stroke="#a89c9c" stroke-width="2.500"/></svg>
      <svg class="more" width="12" height="10" viewBox="0 0 12 10"><path d="M0 0h12v2H0zM1 5h10L6 10z" fill="#999"/></svg>
    </div>
    <div class="canvas">
      <svg class="scene" viewBox="557 240 946 744">
        <g fill="none" stroke="#080808" stroke-width="2" stroke-linejoin="round">
          <path d="M870 447L1220 560L1279 758L1053 946L703 834L644 637z"/>
          <path d="M870 447L929 645L703 834M929 645L1279 758M644 637L993 748L1220 560M993 748L1053 946M1045 503L819 693"/>
        </g>
        <path d="M945 639l50 17 17 57-50-16z" fill="#a8927e" fill-opacity=".2"/>
        <path d="M962 697l46-39 51 16-47 39z" fill="#a8927e" fill-opacity=".2"/>
        <path d="M991 601l17 57-46 39-17-58z" fill="#c0b8ae" fill-opacity=".4"/>
        <path d="M945 639l50 17 17 57 47-39-51-16" fill="none" stroke="#a8722c"/>
        <path d="M962 697l50 16 20 6" stroke="#4444c0" stroke-width="2"/><path d="M962 698l50 16" stroke="#a8722c"/>
        <path d="M945 639L930 590M1008 658l40-34M1035 721l20 6" stroke="#a8722c"/>
        <path d="M945 639l-7-22" stroke="#2fae2a" stroke-width="2"/><path d="M1008 658l16-13" stroke="#d8281c" stroke-width="2"/>
        <path d="M991 601l17 57-46 39-17-58z" fill="none" stroke="#ff9d0a" stroke-width="3"/>
        <path d="M935 609l8 13-4 3-5-1z" fill="#23a01e"/><path d="M927 583l7 10-2 3-5 0z" fill="#9a6414"/>
        <path d="M1034 637l-14 4 0 5 7 3z" fill="#d60000"/><path d="M1054 619l-12 5 1 5 6 1z" fill="#7d5210"/>
        <path d="M1040 722l-14-8-1 7 7 2z" fill="#1414d8"/><path d="M1062 729l-10-6-2 5z" fill="#b47416"/>
        <g class="axis" fill="#a5671a" text-anchor="middle"><text x="924" y="578">Y</text><text x="1064" y="618">X</text><text x="1074" y="741">Z</text></g>
        <path d="M644 881l-13-45" stroke="#22cc22" stroke-width="2"/><path d="M644 881l36-29" stroke="#f00" stroke-width="2"/><path d="M644 881l38 12" stroke="#00f" stroke-width="2"/>
        <path d="M627 826l8 11-5 3-3-1z" fill="#157a12"/><path d="M688 844l-12 5 2 5 4 1z" fill="#c00000"/><path d="M693 897l-11-7-3 6z" fill="#1c1ce0"/>
        <g class="axis" text-anchor="middle"><text x="626" y="826" fill="#22cc22">Y</text><text x="694" y="846" fill="#f00">X</text><text x="699" y="906" fill="#00f">Z</text></g>
      </svg>
      <div class="viewbar">
        <button><svg width="20" height="18" viewBox="0 0 20 18"><path d="M7 1h11v16H7v-4M7 5V1M0 9h13M5 5L1 9l4 4" fill="none" stroke="#999" stroke-width="2"/></svg></button>
        <button class="dd"><svg width="22" height="20" viewBox="0 0 22 20"><path d="M1 7l13-6 7 10-12 8z" fill="#8fb6cc" stroke="#4b7fa0"/><path d="M5 8l8-4 4 6-7 4z" fill="#1a5f8e"/><path d="M9 6l3 8" stroke="#fff"/></svg><svg class="dark" width="8" height="5"><use href="#caret"/></svg></button>
        <button><svg width="16" height="16" viewBox="0 0 20 18"><path d="M12 2h5l2 2-8 8-4-3z" fill="#ffc72e" stroke="#a88"/><path d="M9 5l5 4-3 3-4-3z" fill="#eee" stroke="#999"/><path d="M6 8l4 4-4 5-4-3z" fill="#d23" stroke="#a44"/></svg></button>
        <button><svg width="22" height="20" viewBox="0 0 22 20"><path d="M1 8l10-4 10 4v6l-10 5-10-5z" fill="#2b9ec4"/><path d="M1 8l10-4 10 4-10 4z" fill="#ffe02e"/><path d="M11 0v9" stroke="#3a8a3a"/></svg></button>
        <button class="dd"><svg width="22" height="20" viewBox="0 0 22 20"><path d="M1 5l8-4 12 2v11l-8 5-12-3z" fill="url(#gBlue)"/><path d="M1 5l8-4 12 2-7 4z" fill="#9ee6f6"/></svg><svg class="dark" width="8" height="5"><use href="#caret"/></svg></button>
        <button class="dd"><svg width="22" height="20" viewBox="0 0 22 20"><path d="M1 5l11-4 9 3v10l-9 5-11-4zM1 5l11 3 9-4M12 8v11" fill="#fff" stroke="#6b8ea2"/></svg><svg class="dark" width="8" height="5"><use href="#caret"/></svg></button>
        <button class="dd"><svg width="22" height="20" viewBox="0 0 22 20"><path d="M1 8l7-6 12 3 1 8-8 6-10-3z" fill="#f9b61e" stroke="#b8401a"/><path d="M1 8l10 2 9-5M8 2l3 8 2 9M11 10l10 3M11 10l-8 6" fill="none" stroke="#b8401a"/></svg><svg class="dark" width="8" height="5"><use href="#caret"/></svg></button>
        <button class="dd"><svg width="20" height="20" viewBox="0 0 20 20"><path d="M1 1h18v18H1z" fill="#d9eef6" stroke="#2284aa" stroke-width="1.500"/><circle cx="10" cy="10" r="7" fill="#ffd24a" stroke="#777"/><path d="M7 6h5l2 2v6H7z" fill="#fff" stroke="#678"/></svg><svg class="dark" width="8" height="5"><use href="#caret"/></svg></button>
        <button class="dd"><svg width="20" height="20" viewBox="0 0 20 20"><circle cx="9" cy="11" r="5.500" fill="none" stroke="#4ba0c4" stroke-width="1.500"/><path d="M9 3v16M1 11h16" stroke="#c8141c" stroke-width="1.600"/><path d="M12 1c4 0 6 3 6 6" fill="none" stroke="#c8141c" stroke-width="2"/></svg><svg class="dark" width="8" height="5"><use href="#caret"/></svg></button>
        <button><svg width="20" height="18" viewBox="0 0 20 18"><path d="M1 1h18v16H1z" fill="#fff" stroke="#5b94b0" stroke-width="1.500"/><path d="M4 11h5v4H4z" fill="#1f6f98"/><path d="M4 8V4h4M12 14c3 0 4-2 4-4M13 4l3 2" fill="none" stroke="#7cc6e2"/></svg></button>
        <button class="dd"><svg width="18" height="20" viewBox="0 0 18 20"><path d="M2 1v15M16 1v15M3 7h12" stroke="#2284aa" stroke-width="2"/><path d="M1 18h16" stroke="#c8141c" stroke-width="2"/></svg><svg class="dark" width="8" height="5"><use href="#caret"/></svg></button>
        <button class="dd"><svg width="22" height="20" viewBox="0 0 22 20"><path d="M1 1h20v14H1z" fill="url(#gScreen)" stroke="#555"/><ellipse cx="11" cy="17" rx="8" ry="2.500" fill="#c8c8c8" stroke="#888"/></svg><svg class="dark" width="8" height="5"><use href="#caret"/></svg></button>
        <button><svg width="20" height="11" viewBox="0 0 20 11"><path d="M.5.5h19v10H.5z" stroke="#777"/></svg></button>
        <button><svg width="20" height="20" viewBox="0 0 20 20"><path d="M.5.5h19v18H.5z" fill="#bce6f7" stroke="#2a1010"/></svg></button>
        <button class="dd"><svg width="22" height="18"><use href="#layers"/></svg><svg class="dark" width="8" height="5"><use href="#caret"/></svg></button>
        <span class="combo off layer"><svg width="12" height="16" viewBox="0 0 12 16"><circle cx="6" cy="6" r="4.500" fill="#fff" stroke="#aaa"/><path d="M4 11h4v4H4z" fill="#ccc" stroke="#aaa"/></svg><svg width="14" height="14" viewBox="0 0 14 14"><circle cx="7" cy="7" r="6" fill="#ddd" stroke="#999"/></svg><select aria-label="Hladina" disabled><option>Hladina000</option></select><svg class="c" width="8" height="5"><use href="#caret"/></svg></span>
      </div>
      <p>&lt;Shift-pravý-klik&gt; pro zobrazení filtru výběru.</p>
      <p>&lt;pravý-klik&gt; pro volby zadání entity.</p>
      <output>5484.71mm</output>
    </div>
  </section>

  <aside class="right">
    <div class="phead"><h2>Prohlížeč souborů</h2><svg width="14" height="10"><use href="#pin"/></svg><svg width="16" height="14"><use href="#close"/></svg></div>
    <div class="rbody">
      <div class="files">
        <div class="nav">
          <button disabled><svg width="20" height="18" viewBox="0 0 20 18"><path d="M1 9l9-7v4h9v6h-9v4z" fill="url(#gGrey)"/></svg></button>
          <button disabled><svg width="20" height="18" viewBox="0 0 20 18"><path d="M19 9l-9-7v4H1v6h9v4z" fill="url(#gGrey)"/></svg></button>
          <button disabled><svg width="18" height="20" viewBox="0 0 18 20"><path d="M9 1l8 9h-5v9H6v-9H1z" fill="url(#gGrey)"/></svg></button>
          <button><svg width="24" height="22" viewBox="0 0 24 22"><path d="M3 11C3 5 10 3 15 6M21 11c0 6-7 8-12 5" fill="none" stroke="#1690bc" stroke-width="3"/><path d="M14 1l8 5-7 5zM10 21l-8-5 7-5z" fill="#1690bc"/></svg></button>
        </div>
        <ul class="tree">
          <li><svg width="8" height="10" viewBox="0 0 8 10"><path d="M2 1l4 4-4 4" fill="none" stroke="#777" stroke-width="1.500"/></svg><svg width="20" height="18" viewBox="0 0 20 18"><path d="M10 0l3 6 7 1-5 4 1 7-6-3-6 3 1-7-5-4 7-1z" fill="#1fa5cf"/></svg>Oblíbené</li>
          <li><svg width="8" height="10" viewBox="0 0 8 10"><path d="M2 1l4 4-4 4" fill="none" stroke="#777" stroke-width="1.500"/></svg><svg width="20" height="18"><use href="#folder"/></svg>(C:)</li>
          <li></li><li></li>
        </ul>
        <div class="box2"><h3><svg class="tri" width="12" height="10"><use href="#caret" width="12" height="10"/></svg>Hledat</h3>
          <div class="hledat"><span class="combo"><input type="text" placeholder="Hledat..." aria-label="Hledat"><svg class="dark" width="8" height="5"><use href="#caret"/></svg></span><button><svg width="20" height="20"><use href="#lens"/></svg></button><button><svg width="20" height="20" viewBox="0 0 20 20"><path d="M1 1l5 1 4 6-3 2-5-4z" fill="#d5dadd" stroke="#888"/><path d="M9 8c5 1 8 3 9 6M8 10c0 4 1 7 4 9" fill="none" stroke="#c8141c" stroke-width="2.500"/></svg></button></div></div>
        <div class="box2"><h3><svg class="tri side" width="12" height="10"><use href="#caret" width="12" height="10"/></svg>Seznam souborů</h3></div>
        <div class="box2"><h3><svg class="tri side" width="12" height="10"><use href="#caret" width="12" height="10"/></svg>Náhled</h3></div>
      </div>
      <nav class="strip rstrip">
        <button class="on"><svg width="30" height="26"><use href="#folder"/></svg></button>
        <button><svg width="30" height="30" viewBox="0 0 30 30"><path d="M1 3h28v24H1z" fill="url(#gGold)" stroke="#b86a20"/><path d="M3 1h8v5H3z" fill="#c8743c"/><path d="M6 25L24 7" stroke="#0b4a6e" stroke-width="6"/><path d="M6 25L24 7" stroke="#2b6a94" stroke-width="3"/><ellipse cx="17" cy="13" rx="6" ry="3" fill="none" stroke="#cfe6f0" stroke-width="2" transform="rotate(35 17 13)"/><circle cx="25" cy="6" r="4" fill="#1786ae"/><circle cx="6" cy="24" r="5" fill="#1786ae"/></svg></button>
        <button><svg width="30" height="24"><use href="#layers"/></svg></button>
        <button><svg width="30" height="28" viewBox="0 0 30 28"><use href="#folder" width="30" height="26"/><circle cx="21" cy="18" r="8" fill="#d8e8f0" stroke="#567"/><path d="M21 18v-8a8 8 0 0 0-8 8z" fill="#f4f4f4"/><path d="M21 18h8a8 8 0 0 0-8-8z" fill="#2aa0d8"/><path d="M21 18v8a8 8 0 0 0 8-8z" fill="#3aa53a"/><path d="M21 18v8a8 8 0 0 1-8-8z" fill="#ef6c1e"/></svg></button>
        <button><svg width="30" height="28" viewBox="0 0 30 28"><use href="#blob" x="1" y="0" width="20" height="17"/><path d="M10 18h6v9h-6z" fill="#e2231a"/><path d="M16 18h5v9h-5z" fill="#6ab42d"/><path d="M21 18h6v9h-6z" fill="#2b4aa0"/></svg></button>
      </nav>
    </div>
    <div class="phead out"><h2>Výstup</h2><svg width="11" height="11"><path d="M0 0h11v11H0z" fill="#1c1c1c"/></svg><svg width="14" height="10"><use href="#pin"/></svg><svg width="16" height="14"><use href="#close"/></svg></div>
    <div class="log"><div>3D rám<br>3D rám<br>Vytvořit úsečku<br>Vytvořit úsečku<br>Konstrukční člen</div><div class="bar"><svg class="up" width="10" height="5"><use href="#caret"/></svg><b></b><svg width="10" height="5"><use href="#caret"/></svg></div></div>
  </aside>
</main>

<footer>
  <p>Vyberte čáry a křivky k vytvoření konstrukčních členů.</p>
  <div>
    <button><svg width="18" height="18" viewBox="0 0 18 18"><path d="M1 1h16v16H1z" fill="#fff" stroke="#4a74b8" stroke-width="2"/><path d="M1 1h16v4H1z" fill="#5b8ad8"/><path d="M4 7v9" stroke="#789" stroke-width="2" stroke-dasharray="2 1"/><path d="M8 7h7v3h-2v6h-2v-6H8z" fill="#b03a3a"/></svg></button>
    <button><svg width="20" height="18" viewBox="0 0 20 18"><path d="M1 2h18v11H1z" fill="#1fb0d0" stroke="#234"/><path d="M7 13h6l2 3H5z" fill="#444"/></svg></button>
    <button><svg width="18" height="18" viewBox="0 0 18 18"><path d="M1 1h16v16H1z" fill="#fff" stroke="#4a74b8" stroke-width="2"/><path d="M1 1h16v4H1z" fill="#5b8ad8"/><path d="M4 8h10M4 11h10M4 14h7" stroke="#789"/></svg></button>
    <input type="text" aria-label="Příkazový řádek">
  </div>
</footer>
</body>
</html>
```
FILE: styles.css
```css
* { box-sizing: border-box; }
body { margin: 0; height: 100vh; display: flex; flex-direction: column; overflow: hidden; background: #e2e6e9; color: #111; font: 14px/20px "Open Sans", "Noto Sans", sans-serif; }
button, input, select { font: inherit; color: inherit; margin: 0; }
button { border: 0; background: none; padding: 0; display: flex; align-items: center; justify-content: center; }
h1, h2, h3, p, ul { margin: 0; padding: 0; font-size: 14px; font-weight: 400; }
a { color: inherit; text-decoration: none; }
svg { flex: none; }
.defs { position: absolute; }
.dark { fill: #444; }

.titlebar { height: 33px; display: flex; align-items: center; }
.quick { width: 307px; display: flex; align-items: center; gap: 8px; padding-left: 4px; }
.vline { width: 1px; height: 16px; background: #aab0b5; margin: 0 4px 0 -6px; }
.menu { display: flex; gap: 18px; flex: 1; color: #111; }
h1 { width: 517px; color: #444; }
.wincontrols { display: flex; align-items: center; gap: 15px; padding-right: 6px; }
.wincontrols button:first-child { padding-top: 4px; }

.tabs { height: 27px; display: flex; gap: 1px; color: #444; }
.tabs > button { padding: 0 10px; height: 28px; white-space: nowrap; }
.tabs > .file { width: 91px; margin: 0 2px 0 1px; background: #2a61b5; color: #fff; height: 27px; border: 1px solid #1747a6; }
.tabs > .on { background: #fdfdfd; border: 1px solid #b5bac7; border-bottom: 0; z-index: 1; }
.tabtools { flex: 1; display: flex; align-items: center; justify-content: flex-end; gap: 8px; padding-right: 2px; }
.tabtools .help { margin-left: 4px; }
.find { width: 180px; height: 27px; margin: 0 0 2px 8px; background: #fff; border: 1px solid #b5bac2; display: flex; align-items: center; padding-right: 6px; }
.find input { flex: 1; min-width: 0; border: 0; background: none; padding: 0 2px; }
::placeholder { color: #777; opacity: 1; }
.qmark { font: 700 14px "Open Sans", sans-serif; fill: #fff; }

.ribbon { height: 119px; background: #fdfdfd; display: flex; border-top: 1px solid #b5bac7; border-bottom: 1px solid #b5b9c8; padding-top: 5px; }
.ribbon section { height: 111px; border-right: 1px solid #ccd0d8; display: flex; flex-direction: column; flex: none; }
.ribbon section > div { display: flex; justify-content: center; height: 88px; }
.ribbon .g175 > div, .ribbon .pole > div { padding-left: 6px; }
.ribbon button { flex-direction: column; justify-content: flex-start; flex: none; color: #222; white-space: nowrap; }
.ribbon button > span { margin-top: 3px; }
.ribbon h2 { text-align: center; color: #6b7078; }
.g175 { width: 176px; } .g183 { width: 183px; } .g247 { width: 247px; } .g134 { width: 134px; } .g178 { width: 178px; } .g153 { width: 153px; } .g93 { width: 93px; } .g75 { width: 75px; } .g99 { width: 99px; }
.w48 { width: 48px; } .w52 { width: 52px; } .w54 { width: 54px; } .w58 { width: 58px; } .w60 { width: 60px; } .w62 { width: 62px; } .w64 { width: 64px; } .w68 { width: 68px; } .w72 { width: 72px; } .w88 { width: 88px; } .w96 { width: 96px; } .w114 { width: 114px; }
.bom { font: 700 12px "Liberation Sans", sans-serif; fill: #14527a; }
.num { font: 700 14px "Liberation Sans", sans-serif; fill: #c8141c; }
.ref { font: 700 6px "Liberation Sans", sans-serif; fill: #888; }

.toolbar { height: 34px; display: flex; align-items: center; }
.grip { width: 4px; height: 20px; margin: 0 4px; border-left: 2px dotted #99a; }
.tb { width: 28px; height: 26px; flex: none; }
.tb.hot { width: 27px; }
.hot { background: #ffe17a; border: 1px solid #c89a3c; }
.gapr { margin: 0 5px 0 2px; }
.tsep { width: 1px; height: 24px; background: #c3c7cb; margin: 0 4px 0 3px; }
.combo { position: relative; width: 165px; height: 26px; display: flex; margin: 0 1px; background: #fff; border: 1px solid #b5bac2; }
.combo select, .combo input { appearance: none; border: 0; background: none; width: 100%; padding: 0 3px; opacity: 1; }
.combo > svg:last-child { position: absolute; right: 6px; top: 10px; }
.combo.off { background: #f0f0f0; border-color: #d5d9e2; color: #888; fill: #aaa; }

main { flex: 1; min-height: 0; display: flex; }
.phead { height: 27px; display: flex; align-items: center; gap: 10px; padding: 0 11px 0 6px; color: #444; }
.phead h2 { flex: 1; }
.left { width: 557px; display: flex; flex-direction: column; }
.lbody { flex: 1; min-height: 0; display: flex; margin: 0 2px; border: 1px solid #b9bec6; border-left: 0; border-right: 2px solid #c5c9cf; }
.strip { width: 38px; border-right: 1px solid #b9bec6; display: flex; flex-direction: column; }
.strip button { height: 60px; }
.strip .on { background: #fdfdfd; border-left: 1px solid #b9bec6; border-bottom: 1px solid #b9bec6; margin-right: -1px; height: 58px; }
.panel { flex: 1; min-width: 0; display: flex; flex-direction: column; padding: 2px 4px 3px 3px; }
.actions { display: flex; gap: 2px; height: 30px; margin-bottom: 1px; }
.sq { width: 33px; height: 29px; background: #fdfdfd; border: 1px solid #b9bec6; }
.push { margin-left: auto; font-size: 16px; }
.thin { width: 17px; }
.scroller { flex: 1; min-height: 0; display: flex; gap: 3px; }
.sections { flex: 1; min-width: 0; overflow: hidden; display: flex; flex-direction: column; gap: 3px; padding: 2px 0 0 2px; }
.box { flex: none; border: 1px solid #b9bfc9; background: #dde1e9; }
.box h3, .box2 h3 { height: 28px; display: flex; align-items: center; gap: 6px; padding: 0 14px 0 4px; background: #fdfdfd; font-weight: 700; color: #333; }
.tri { fill: #555a62; }
.side { transform: rotate(-90deg); }
.box h3 + div { border-top: 1px solid #b9bfc9; padding-left: 10px; }
.b111 { height: 110px; } .b214 { height: 213px; } .b208 { height: 207px; }
.modes { display: flex; gap: 1px; padding: 4px 0 0 184px; }
.modes button, .mirror button { width: 45px; height: 45px; border: 1px solid #b9bec6; background: #fdfdfd; overflow: hidden; }
.modes .hot { background: #ffe17a; border-color: #c08c2c; }
.row { display: flex; align-items: center; height: 31px; }
.row > label { width: 176px; flex: none; }
.row > input { flex: 1; min-width: 0; height: 27px; padding: 0 3px; border: 1px solid #b9bec6; }
.row > input:disabled { background: #f0f0f0; color: #888; }
.row > .tight { padding: 0; }
.b214 .row, .mat .row { padding-right: 9px; }
.cesty > input { flex: none; width: 228px; height: 29px; border: 1px solid #0c86e8; background: #fff; }
.cesty svg { margin-left: 7px; }
.cesty svg + svg { margin-left: 14px; }
.tick { display: flex; align-items: center; gap: 6px; height: 26px; }
input[type="checkbox"] { appearance: none; position: relative; width: 16px; height: 16px; border: 1px solid #888c92; background: #cfd8e2; box-shadow: inset 0 0 0 2px #eef1f4; }
input[type="checkbox"]:checked::after { content: ""; position: absolute; left: 4px; top: 0; width: 6px; height: 10px; border: solid #3f6388; border-width: 0 2px 2px 0; transform: rotate(35deg); }
h3 > .grey { margin-left: auto; }
.profile { display: block; margin: 8px 0 5px 172px; font: 13px "Liberation Sans", sans-serif; }
.lib { width: 28px; height: 28px; margin-left: 1px; background: #fdfdfd; border: 1px solid #b9bec6; overflow: hidden; }
.spec { height: 28px; }
.pick { flex: 1; position: relative; display: flex; height: 27px; background: #fff; border: 1px solid #b9bec6; }
.pick select { flex: 1; appearance: none; border: 0; background: none; padding: 0 3px; }
.pick > i { width: 21px; background: #ffe17a; border: 1px solid #c89a3c; display: flex; align-items: center; justify-content: center; }
.popup { position: absolute; z-index: 5; left: -4px; right: -3px; top: 21px; height: 209px; border: 5px solid #ed1c24; background: #fff; display: flex; }
.list { flex: 1; overflow: hidden; display: flex; flex-direction: column; justify-content: flex-end; }
.list span { flex: none; height: 20px; padding: 0 2px; color: #222; }
.list [aria-selected] { background: #0078d7; color: #fff; outline: 1px dotted #d08a40; outline-offset: -1px; }
.bar { width: 19px; background: #d8dce5; display: flex; flex-direction: column; align-items: center; justify-content: space-between; padding: 8px 0; fill: #444; }
.bar b { width: 100%; height: 22px; background: #eef1f6; border: 1px solid #7b8494; margin-bottom: auto; margin-top: 9px; display: flex; align-items: center; justify-content: center; }
.bar b::after { content: ""; width: 8px; height: 8px; background: repeating-linear-gradient(#888 0 1px, transparent 1px 3px); }
.up { transform: rotate(180deg); }
.tall { padding: 9px 0 8px; }
.tall b { height: 598px; margin-top: 7px; }
.b208 { padding-top: 3px; }
.mirror { height: 47px; }
.mirror span { width: 252px; }
.mirror button { margin-right: 3px; }
.mat { padding-top: 2px; }

.center { flex: 1; min-width: 0; display: flex; flex-direction: column; }
.docs { height: 27px; display: flex; align-items: center; gap: 8px; border-bottom: 1px solid #b9bec6; }
.doc { width: 213px; height: 27px; background: #fdfdfd; border: 1px solid #b9bec6; border-bottom: 0; padding-left: 38px; display: flex; align-items: center; gap: 8px; }
.more { margin-left: auto; margin-right: 6px; }
.canvas { position: relative; flex: 1; min-height: 0; background: linear-gradient(#fff, #cfcfcf 50%, #9f9f9f); border-bottom: 1px solid #eee; }
.scene { position: absolute; inset: 0; width: 100%; height: 100%; }
.axis { font: 19px "Open Sans", sans-serif; }
.viewbar { position: relative; display: flex; align-items: center; height: 28px; padding: 2px 0 0 117px; }
.viewbar button { width: 28px; height: 26px; flex: none; }
.viewbar .dd { width: 44px; gap: 5px; }
.layer { width: 144px; height: 26px; align-items: center; gap: 5px; padding-left: 10px; margin-left: 5px; }
.canvas p { position: relative; height: 26px; line-height: 20px; padding-left: 21px; font-family: "Noto Sans", sans-serif; }
.canvas output { position: absolute; left: 4px; bottom: 0; font-size: 19px; line-height: 24px; }

.right { width: 414px; display: flex; flex-direction: column; }
.right .phead { padding-left: 8px; padding-right: 5px; gap: 10px; }
.rbody { flex: 1; min-height: 0; display: flex; }
.files { flex: 1; min-width: 0; margin-left: 3px; padding: 1px; border: 1px solid #b9bec6; background: linear-gradient(#e2e6e9 270px, #dde1ea 270px); display: flex; flex-direction: column; }
.nav { display: flex; gap: 5px; margin-bottom: 3px; }
.nav button { width: 34px; height: 30px; background: #fdfdfd; border: 1px solid #b9bec6; }
.nav button:disabled { background: #efefef; border-color: #d0d3d7; }
.tree { list-style: none; height: 97px; background: #fff; border: 1px solid #b9bec6; margin-bottom: 8px; overflow: hidden; }
.tree li { height: 23px; display: flex; align-items: center; gap: 3px; padding-left: 6px; }
.tree li svg:first-child { margin-right: 4px; }
.tree li:nth-child(even) { background: #f5f5f5; }
.box2 { border: 1px solid #b9bfc9; margin-bottom: 2px; background: #dde1e9; }
.hledat { border-top: 1px solid #b9bfc9; display: flex; gap: 4px; padding: 3px 2px; }
.hledat .combo { flex: 1; height: 31px; margin: 0; }
.hledat button { width: 47px; height: 31px; background: #fdfdfd; border: 1px solid #b9bec6; }
.hledat .combo > svg:last-child { top: 12px; }
.rstrip { width: 34px; border: 0; border-top: 1px solid #b9bec6; }
.rstrip .on { border-left: 0; margin: 0; }
.out { height: 30px; }
.log { height: 94px; margin-left: 3px; background: #fff; border: 1px solid #b9bec6; display: flex; overflow: hidden; }
.log div:first-child { flex: 1; padding-left: 4px; height: 100px; margin-top: -11px; }
.log .bar b { margin-top: 36px; }

footer { height: 37px; border-bottom: 3px solid #1f2020; display: flex; align-items: center; justify-content: space-between; padding-left: 6px; color: #444; }
footer p { padding-top: 3px; }
footer div { width: 559px; height: 30px; display: flex; align-items: center; border-left: 1px solid #777; padding-left: 17px; }
footer button { width: 25px; height: 25px; margin-right: 10px; background: #ffe17a; border: 1px solid #c89a3c; }
footer input { flex: 1; height: 27px; border: 1px solid #b5bac2; border-right: 0; background: #fff; }
```
